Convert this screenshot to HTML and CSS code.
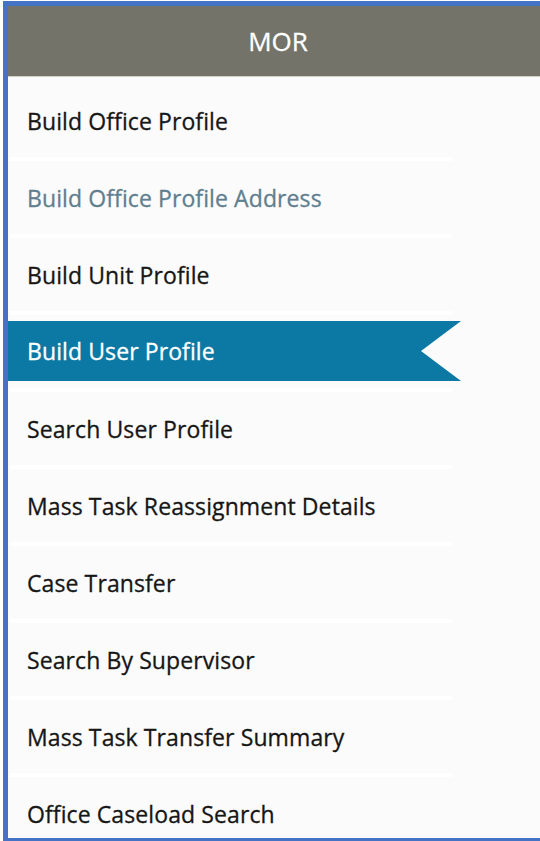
FILE: index.html
```html
<!DOCTYPE html>
<html lang="en">
<head>
<meta charset="utf-8">
<title>MOR</title>
<link rel="stylesheet" href="styles.css">
</head>
<body>
<div class="panel">
  <div class="panel-header">MOR</div>
  <ul class="menu">
    <li class="menu-item"><span class="menu-label">Build Office Profile</span></li>
    <li class="menu-item is-muted"><span class="menu-label">Build Office Profile Address</span></li>
    <li class="menu-item"><span class="menu-label">Build Unit Profile</span></li>
    <li class="menu-item is-active"><span class="menu-label">Build User Profile</span></li>
    <li class="menu-item"><span class="menu-label">Search User Profile</span></li>
    <li class="menu-item"><span class="menu-label">Mass Task Reassignment Details</span></li>
    <li class="menu-item"><span class="menu-label">Case Transfer</span></li>
    <li class="menu-item"><span class="menu-label">Search By Supervisor</span></li>
    <li class="menu-item"><span class="menu-label">Mass Task Transfer Summary</span></li>
    <li class="menu-item"><span class="menu-label">Office Caseload Search</span></li>
  </ul>
</div>
</body>
</html>
```

FILE: styles.css
```css
html, body {
  margin: 0;
  padding: 0;
  background: #ffffff;
  overflow: hidden;
}

body {
  font-family: "Open Sans", "Noto Sans", sans-serif;
}

.panel {
  margin: 1px 0 0 3px;
  height: 832px;
  border: 5px solid #4472c4;
  border-right: none;
  background: #fbfbfb;
  overflow: hidden;
  display: flex;
  flex-direction: column;
}

.panel-header {
  flex: 0 0 auto;
  height: 70px;
  border-bottom: 1px solid #d2d2cb;
  background: #737369;
  color: #ffffff;
  font-size: 26px;
  -webkit-text-stroke: 0.3px #ffffff;
  display: flex;
  align-items: center;
  justify-content: center;
  padding-left: 8px;
}

.menu {
  list-style: none;
  margin: 0;
  padding: 7px 0 0 0;
  display: flex;
  flex-direction: column;
}

.menu-item {
  display: flex;
  flex-direction: column;
  color: #161616;
  font-size: 23px;
  letter-spacing: 0.1px;
  -webkit-text-stroke: 0.3px currentColor;
}

.menu-item::after {
  content: "";
  display: block;
  height: 4px;
  width: 442px;
  margin-left: 2px;
  background: #ffffff;
}

.menu-label {
  height: 73px;
  display: flex;
  align-items: center;
  padding-left: 19px;
  white-space: nowrap;
}

.menu-item.is-muted {
  color: #5f7f90;
}

.menu-item.is-active .menu-label {
  height: 60px;
  margin: 6px 0 7px 0;
  width: 434px;
  background: #0b79a3;
  color: #ffffff;
  clip-path: polygon(0 0, 100% 0, calc(100% - 40px) 50%, 100% 100%, 0 100%);
}
```
